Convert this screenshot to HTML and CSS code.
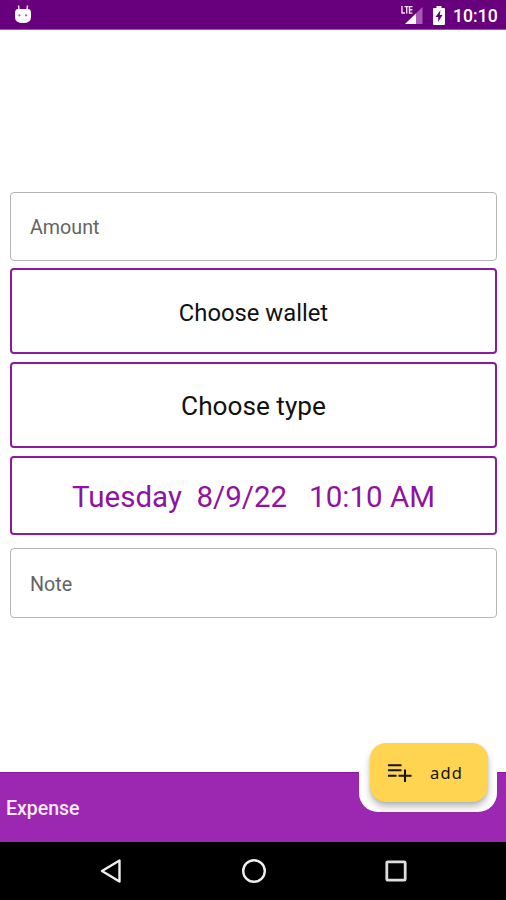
FILE: index.html
```html
<!DOCTYPE html>
<html lang="en">
<head>
<meta charset="utf-8">
<title>Expense</title>
<link rel="stylesheet" href="styles.css">
</head>
<body>
<div class="screen">
  <header class="status">
    <svg class="droid" width="18" height="20" viewBox="0 0 18 20">
      <path d="M4.500 .5 5 5M13.500 .5 13 5" stroke="#f4e6f6" stroke-width="1.500"/>
      <path d="M1 8Q1 4 4 4h10q3 0 3 4v4q0 6-8 6t-8-6z" fill="#fff"/>
      <circle cx="5.500" cy="10.300" r="1.100" fill="#a05aae"/><circle cx="12" cy="10.300" r="1.100" fill="#a05aae"/>
    </svg>
    <div class="status-right">
      <svg class="signal" width="23" height="20" viewBox="0 0 23 20">
        <path d="M21.500 2v17H4z" fill="#a45bb3"/>
        <path d="M15 8.500V19H4z" fill="#fff"/>
        <path d="M0 0h12.500v10H0z" fill="#68007d"/>
        <path d="M1 1v7h3M3.500 1.600h4M5.700 1.600V8.500M11.500 1.600H8.500v6.500h3M8.500 4.800h3" fill="none" stroke="#f1dff4" stroke-width="1.400"/>
      </svg>
      <svg class="battery" width="12" height="19" viewBox="0 0 12 19">
        <path d="M3.500 0h5v2H11q1 0 1 1v15q0 1-1 1H1q-1 0-1-1V3q0-1 1-1h2.500z" fill="#fff"/>
        <path d="M7.500 4 2.500 11h2.700v5l4.300-7H6.800z" fill="#68007d"/>
      </svg>
      <span class="clock">10:10</span>
    </div>
  </header>
  <main class="form">
    <div class="box field amount"><span>Amount</span></div>
    <div class="box choice wallet"><span>Choose wallet</span></div>
    <div class="box choice type"><span>Choose type</span></div>
    <div class="box choice date"><span>Tuesday&nbsp; 8/9/22 &nbsp; 10:10 AM</span></div>
    <div class="box field note"><span>Note</span></div>
  </main>
  <footer class="bar">
    <span class="title">Expense</span>
    <div class="cradle">
      <div class="add">
        <svg width="26" height="20" viewBox="0 0 26 20" fill="none" stroke="#171307" stroke-width="2.100">
          <path d="M1 2.200h13.500M1 7.300h13.500M1 12.700h8.500M18 6.500v12.500M11.500 12.700h13"/>
        </svg>
        <span>add</span>
      </div>
    </div>
  </footer>
  <nav class="nav">
    <svg width="22" height="24" viewBox="0 0 22 24"><path d="M2 12 19.500 1.500v21z" fill="none" stroke="#eee" stroke-width="2.400" stroke-linejoin="round"/></svg>
    <svg width="26" height="26" viewBox="0 0 26 26"><circle cx="13" cy="13" r="10.800" fill="none" stroke="#eee" stroke-width="2.400"/></svg>
    <svg width="22" height="22" viewBox="0 0 22 22"><rect x="1.800" y="1.800" width="18.400" height="18.400" rx="1" fill="none" stroke="#ddd" stroke-width="2.800"/></svg>
  </nav>
</div>
</body>
</html>
```
FILE: styles.css
```css
* { box-sizing: border-box; }
body { margin: 0; background: #fff; font-family: Roboto, sans-serif; }
.screen { width: 506px; height: 900px; display: flex; flex-direction: column; overflow: hidden; }
svg { display: block; flex: none; }
.status { height: 30px; flex: none; background: #68007d; border-bottom: 1px solid #9c58a8; display: flex; justify-content: space-between; padding: 5px 9px 0 14px; }
.status-right { display: flex; }
.battery { margin: 1px 8px 0 9px; }
.clock { width: 44px; color: #fff; font-size: 17.600px; font-weight: 500; line-height: 22px; white-space: nowrap; }
.form { flex: 1; padding: 162px 9px 0 10px; }
.box { border-radius: 4px; display: flex; align-items: center; white-space: pre; }
.field { border: 1.500px solid #b5b5b5; padding-left: 19px; font-size: 19.700px; color: #646464; }
.choice { border: 2px solid #8c1a9f; justify-content: center; color: #111; }
.amount { height: 69px; padding-top: 2px; }
.wallet { height: 86px; margin-top: 7px; font-size: 23.800px; padding-top: 3px; }
.type { height: 86px; margin-top: 8px; font-size: 26.200px; padding-top: 2px; }
.date { height: 79px; margin-top: 8px; font-size: 29.500px; color: #8f13a2; padding-top: 3px; }
.note { height: 70px; margin-top: 13px; padding-top: 2px; }
.bar { height: 70px; flex: none; background: #9c27b0; border-top: 1px solid #8a169d; display: flex; justify-content: space-between; padding: 0 9px 0 6px; }
.title { color: #f8eafa; font-size: 19.500px; font-weight: 500; line-height: 72px; }
.cradle { width: 138px; height: 40px; background: #fff; border-radius: 0 0 19px 19px; margin-top: -1px; padding: 0 10px 0 11px; }
.add { width: 118px; height: 59px; margin-top: -29px; background: #ffd451; border-radius: 16px; box-shadow: 0 5px 7px rgba(0,0,0,.25), 0 1px 3px rgba(0,0,0,.1); display: flex; align-items: center; padding-left: 17px; font-family: "Noto Sans", sans-serif; font-size: 16.500px; letter-spacing: 1.200px; color: #171307; }
.add span { margin-left: 17px; }
.nav { height: 58px; flex: none; background: #000; display: flex; align-items: center; justify-content: space-between; padding: 0 99px 0 100px; }
```
